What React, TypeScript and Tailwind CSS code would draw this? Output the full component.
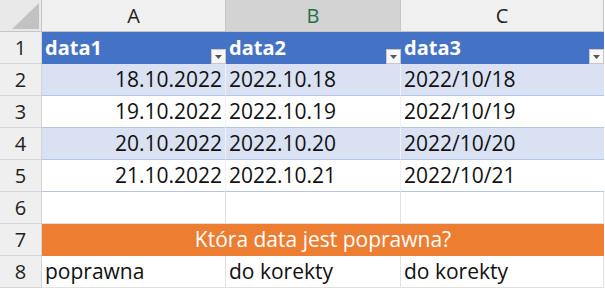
const COLS = ['A', 'B', 'C'];

const ROWS: { cells: string[]; align: ('l' | 'r')[] }[] = [
  { cells: ['18.10.2022', '2022.10.18', '2022/10/18'], align: ['r', 'l', 'l'] },
  { cells: ['19.10.2022', '2022.10.19', '2022/10/19'], align: ['r', 'l', 'l'] },
  { cells: ['20.10.2022', '2022.10.20', '2022/10/20'], align: ['r', 'l', 'l'] },
  { cells: ['21.10.2022', '2022.10.21', '2022/10/21'], align: ['r', 'l', 'l'] },
];

function FilterButton() {
  return (
    <div className="absolute right-0 bottom-0 w-[15px] h-[15px] bg-[#f7f7f7] border border-[#c8c8c8] flex items-center justify-center">
      <svg width="7" height="4" viewBox="0 0 7 4">
        <polygon points="0,0 7,0 3.5,4" fill="#555" />
      </svg>
    </div>
  );
}

function RowNum({ n }: { n: number }) {
  return (
    <div className="h-[32px] bg-[#efefef] border-r border-b border-[#d4d4d4] flex items-center justify-center text-[20px] text-[#222]">
      {n}
    </div>
  );
}

export default function App() {
  return (
    <div
      className="w-[605px] h-[291px] bg-white overflow-hidden"
      style={{ fontFamily: '"Open Sans", "Noto Sans", sans-serif' }}
    >
      <div className="grid grid-cols-[42px_184px_175px_203px]">
        {/* corner */}
        <div className="relative h-[32px] bg-[#e9e9e9] border-r border-b border-[#c6c6c6]">
          <svg className="absolute right-[2px] bottom-[2px]" width="27" height="26" viewBox="0 0 27 26">
            <polygon points="27,0 27,26 0,26" fill="#c2c2c2" />
          </svg>
        </div>
        {COLS.map(c => (
          <div
            key={c}
            className={
              c === 'B'
                ? 'h-[32px] bg-[#d3d3d3] border-r border-b border-[#c6c6c6] flex items-center justify-center text-[20px] text-[#217346]'
                : 'h-[32px] bg-[#f0f0f0] border-r border-b border-[#c6c6c6] flex items-center justify-center text-[20px] text-[#222]'
            }
          >
            {c}
          </div>
        ))}

        {/* row 1: table header */}
        <RowNum n={1} />
        {['data1', 'data2', 'data3'].map(h => (
          <div key={h} className="relative h-[32px] bg-[#4472c4] flex items-center pl-[3px] text-[20px] font-bold text-white">
            {h}
            <FilterButton />
          </div>
        ))}

        {ROWS.map((r, i) => (
          <>
            <RowNum key={`n${i}`} n={i + 2} />
            {r.cells.map((v, j) => (
              <div
                key={`${i}-${j}`}
                className={`h-[32px] border-b border-[#b4c6e7] flex items-center px-[3px] text-[21px] text-[#111] ${
                  i % 2 === 0 ? 'bg-[#d9e1f2]' : 'bg-white'
                } ${j < 2 ? 'border-r border-r-[#eef1f7]' : ''} ${r.align[j] === 'r' ? 'justify-end' : 'justify-start'}`}
              >
                {v}
              </div>
            ))}
          </>
        ))}

        {/* row 6: empty */}
        <RowNum n={6} />
        <div className="h-[32px] border-r border-b border-[#e1e1e1]" />
        <div className="h-[32px] border-r border-b border-[#e1e1e1]" />
        <div className="h-[32px] border-r border-b border-[#e1e1e1]" />

        {/* row 7: merged orange banner */}
        <RowNum n={7} />
        <div className="col-span-3 h-[32px] bg-[#ed7d31] flex items-center justify-center text-[21px] text-white">
          Która data jest poprawna?
        </div>

        {/* row 8 */}
        <RowNum n={8} />
        {['poprawna', 'do korekty', 'do korekty'].map((v, j) => (
          <div key={j} className="h-[32px] border-r border-b border-[#e1e1e1] flex items-center px-[3px] text-[21px] text-[#111]">
            {v}
          </div>
        ))}
      </div>
    </div>
  );
}
